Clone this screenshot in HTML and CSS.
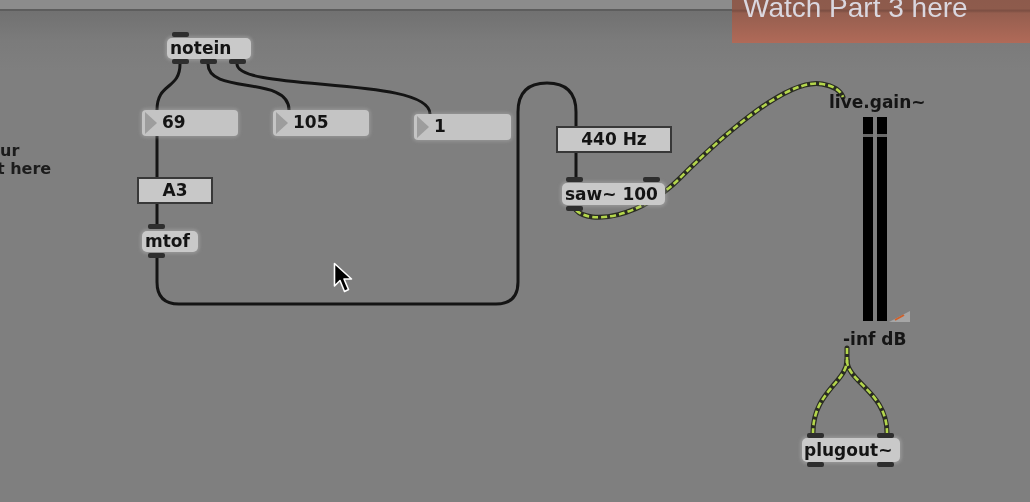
FILE: index.html
```html
<!DOCTYPE html>
<html>
<head>
<meta charset="utf-8">
<link rel="stylesheet" href="styles.css">
</head>
<body>
<div class="screen">
  <div class="topbar"></div>
  <div class="canvas">
    <svg class="cables" width="1030" height="502" viewBox="0 0 1030 502">
      <g class="cord">
        <path d="M180,64 C180,90 157,82 157,110"/>
        <path d="M208,64 C208,95 289,75 289,110"/>
        <path d="M237,64 C237,92 430,76 430,114"/>
        <path d="M157,136 L157,177"/>
        <path d="M157,204 L157,226"/>
        <path d="M157,258 L157,282 Q157,304 179,304 L496,304 Q518,304 518,282 L518,112 Q518,83 547,83 Q576,83 576,112 L576,126"/>
        <path d="M576,152 L576,178"/>
      </g>
      <g class="sig-base">
        <path d="M576,210 C590,225 640,218 680,178 C730,128 790,78 822,84 C834,86 840,90 843,97"/>
        <path d="M847,348 L847,360 C847,382 813,392 813,433"/>
        <path d="M847,360 C847,382 887,392 887,433"/>
      </g>
      <g class="sig-top">
        <path d="M576,210 C590,225 640,218 680,178 C730,128 790,78 822,84 C834,86 840,90 843,97"/>
        <path d="M847,348 L847,360 C847,382 813,392 813,433"/>
        <path d="M847,360 C847,382 887,392 887,433"/>
      </g>
    </svg>

    <div class="side-note">
      <span>ur</span>
      <span>t here</span>
    </div>

    <div class="obj notein"><span class="tab" style="left:5px;top:-6px"></span>notein<span class="tab" style="left:5px;top:21px"></span><span class="tab" style="left:33px;top:21px"></span><span class="tab" style="left:62px;top:21px"></span></div>

    <div class="num n69"><i class="tri"></i>69</div>
    <div class="num n105"><i class="tri"></i>105</div>
    <div class="num n1"><i class="tri"></i>1</div>

    <div class="msg a3">A3</div>

    <div class="obj mtof"><span class="tab" style="left:6px;top:-7px"></span>mtof<span class="tab" style="left:6px;top:22px"></span></div>

    <div class="msg hz">440 Hz</div>

    <div class="obj saw"><span class="tab" style="left:4px;top:-6px"></span><span class="tab" style="left:81px;top:-6px"></span>saw~ 100<span class="tab" style="left:4px;top:23px"></span></div>

    <div class="label gain-label">live.gain~</div>
    <div class="meter">
      <div class="bar"></div>
      <div class="bar"></div>
      <svg class="slider" width="22" height="13" viewBox="0 0 22 13">
        <polygon points="0,12 21,1 21,12" fill="#a6a6a6"/>
        <line x1="6" y1="10" x2="15" y2="5" stroke="#d0602a" stroke-width="2"/>
      </svg>
    </div>
    <div class="label db-label">-inf dB</div>

    <div class="obj plugout"><span class="tab" style="left:5px;top:-5px"></span><span class="tab" style="left:75px;top:-5px"></span>plugout~<span class="tab" style="left:5px;top:24px"></span><span class="tab" style="left:75px;top:24px"></span></div>

    <svg class="cursor" width="22" height="32" viewBox="0 0 22 32">
      <path d="M1.5,1.5 L1.5,24 L7,18.5 L11.5,29.5 L15.5,27.5 L11,17 L18.5,17 Z" fill="#000" stroke="#fff" stroke-width="1.6" stroke-linejoin="round"/>
    </svg>
  </div>

  <div class="banner">Watch Part 3 here</div>
</div>
</body>
</html>
```

FILE: styles.css
```css
html, body {
  margin: 0;
  padding: 0;
  background: #7f7f7f;
}

.screen {
  position: relative;
  width: 1030px;
  height: 502px;
  overflow: hidden;
  background: #7f7f7f;
  font-family: "DejaVu Sans", Verdana, sans-serif;
  filter: blur(0.45px);
}

.topbar {
  height: 9px;
  background: #8c8c8c;
  border-bottom: 2px solid #5d5d5d;
}

.canvas {
  position: relative;
  height: 491px;
  background: linear-gradient(#717171 0px, #7b7b7b 30px, #7f7f7f 60px, #7f7f7f 100%);
}

.cables {
  position: absolute;
  left: 0;
  top: -11px;
}

.cord path {
  fill: none;
  stroke: #141414;
  stroke-width: 3;
  stroke-linecap: round;
}

.sig-base path {
  fill: none;
  stroke: #2a2c22;
  stroke-width: 5;
  stroke-linecap: round;
}

.sig-top path {
  fill: none;
  stroke: #b4d64c;
  stroke-width: 2.6;
  stroke-dasharray: 6 3;
}

.obj, .num, .msg, .label, .meter, .side-note, .cursor {
  position: absolute;
}

.obj {
  box-sizing: border-box;
  background: #c9c9c9;
  border-radius: 5px;
  color: #141414;
  font-weight: bold;
  font-size: 17px;
  line-height: 21px;
  padding-left: 3px;
  box-shadow: 0 0 3px 2px rgba(190, 190, 190, 0.35);
  white-space: nowrap;
}

.tab {
  position: absolute;
  width: 17px;
  height: 5px;
  border-radius: 2px;
  background: #2e2e2e;
}

.notein { left: 167px; top: 27px; width: 84px; height: 21px; }
.mtof { left: 142px; top: 220px; width: 56px; height: 21px; }
.saw { left: 562px; top: 172px; width: 103px; height: 22px; line-height: 22px; }
.plugout { left: 802px; top: 427px; width: 98px; height: 24px; line-height: 24px; padding-left: 2px; }

.num {
  box-sizing: border-box;
  height: 26px;
  width: 96px;
  background: #c4c4c4;
  border-radius: 4px;
  color: #141414;
  font-weight: bold;
  font-size: 17px;
  line-height: 25px;
  padding-left: 20px;
  box-shadow: 0 0 3px 2px rgba(190, 190, 190, 0.3);
}

.tri {
  position: absolute;
  left: 3px;
  top: 2px;
  width: 0;
  height: 0;
  border-top: 11px solid transparent;
  border-bottom: 11px solid transparent;
  border-left: 12px solid #9d9d9d;
}

.n69 { left: 142px; top: 99px; }
.n105 { left: 273px; top: 99px; }
.n1 { left: 414px; top: 103px; width: 97px; }

.msg {
  box-sizing: border-box;
  background: #c8c8c8;
  border: 2px solid #383838;
  color: #141414;
  font-weight: bold;
  font-size: 17px;
  line-height: 23px;
  text-align: center;
}

.a3 { left: 137px; top: 166px; width: 76px; height: 27px; }
.hz { left: 556px; top: 115px; width: 116px; height: 27px; }

.label {
  color: #151515;
  font-weight: bold;
  font-size: 17px;
  line-height: 20px;
  white-space: nowrap;
}

.gain-label { left: 829px; top: 81px; }
.db-label { left: 843px; top: 318px; }

.meter {
  left: 863px;
  top: 106px;
  width: 48px;
  height: 205px;
  display: flex;
  gap: 4px;
}

.bar {
  width: 10px;
  height: 204px;
  background: linear-gradient(#000 0, #000 17px, #6a6a6a 17px, #6a6a6a 20px, #000 20px, #000 100%);
}

.slider {
  position: absolute;
  left: 26px;
  top: 193px;
}

.side-note {
  left: -3px;
  top: 131px;
  display: flex;
  flex-direction: column;
  align-items: flex-start;
  color: #1c1c1c;
  font-weight: bold;
  font-size: 16px;
  line-height: 18px;
}

.side-note span:first-child { padding-left: 3px; }

.cursor {
  left: 333px;
  top: 251px;
}

.banner {
  position: absolute;
  left: 732px;
  top: 0;
  width: 298px;
  height: 49px;
  box-sizing: border-box;
  margin-top: -6px;
  padding-left: 11px;
  background: linear-gradient(#8c5a4c 0, #8e5b4c 15px, #7e5044 16px, #7e5044 17px, #955e4f 19px, #b06a58 49px);
  color: #dad7df;
  font-family: "Liberation Sans", Arial, sans-serif;
  font-size: 28px;
  line-height: 28px;
  white-space: nowrap;
}
```
